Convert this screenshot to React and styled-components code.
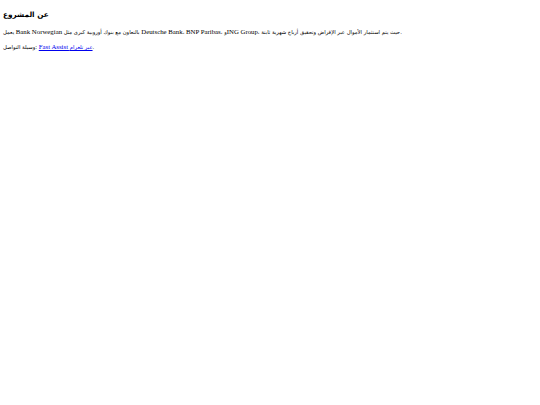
import React from "react";
import styled, { createGlobalStyle } from "styled-components";

const Global = createGlobalStyle`
  html, body { margin: 0; padding: 0; background: #fff; }
  body { font-family: "DejaVu Sans", sans-serif; color: #000; }
`;

const Page = styled.main`
  padding: 0 3px;
  display: flex;
  flex-direction: column;
`;

const Title = styled.h2`
  font-size: 7.3px;
  font-weight: bold;
  margin: 10px 0 8px;
  line-height: 10px;
`;

const Para = styled.p`
  font-size: 5.3px;
  line-height: 8px;
  margin: 0 0 7px;
`;

const Latin = styled.span`
  font-family: "Liberation Serif", serif;
  font-size: 6.8px;
`;

const Link = styled.a`
  color: #0000ee;
  text-decoration: underline;
`;

export default function App() {
  return (
    <>
      <Global />
      <Page>
        <Title>عن المشروع</Title>
        <Para>
          يعمل <Latin>Bank Norwegian</Latin> بالتعاون مع بنوك أوروبية كبرى مثل <Latin>Deutsche Bank</Latin>، <Latin>BNP Paribas</Latin>، و<Latin>ING Group</Latin>، حيث يتم استثمار الأموال عبر الإقراض وتحقيق أرباح شهرية ثابتة.
        </Para>
        <Para>
          وسيلة التواصل: <Link href="#"><Latin>Fast Assist</Latin> عبر تلغرام</Link>.
        </Para>
      </Page>
    </>
  );
}
